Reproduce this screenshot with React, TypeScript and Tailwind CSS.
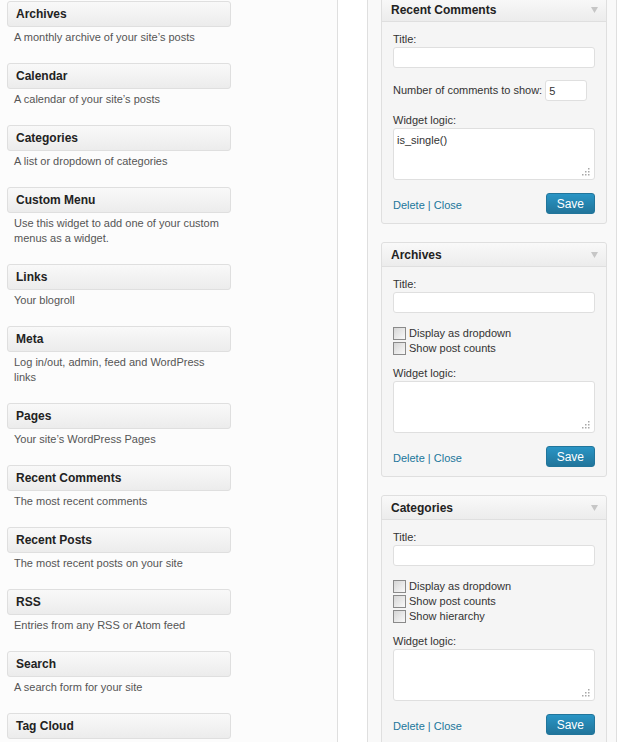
import React from "react";

const AVAILABLE = [
  { title: "Archives", desc: "A monthly archive of your site’s posts" },
  { title: "Calendar", desc: "A calendar of your site’s posts" },
  { title: "Categories", desc: "A list or dropdown of categories" },
  { title: "Custom Menu", desc: "Use this widget to add one of your custom menus as a widget." },
  { title: "Links", desc: "Your blogroll" },
  { title: "Meta", desc: "Log in/out, admin, feed and WordPress links" },
  { title: "Pages", desc: "Your site’s WordPress Pages" },
  { title: "Recent Comments", desc: "The most recent comments" },
  { title: "Recent Posts", desc: "The most recent posts on your site" },
  { title: "RSS", desc: "Entries from any RSS or Atom feed" },
  { title: "Search", desc: "A search form for your site" },
  { title: "Tag Cloud", desc: "" },
];

function Grip() {
  // dotted resize handle in the corner of the textarea
  return (
    <svg width="8" height="8" viewBox="0 0 8 8" className="absolute bottom-[4px] right-[5px]">
      <rect x="6" y="0" width="1.5" height="1.5" fill="#a8a8a8" />
      <rect x="6" y="3" width="1.5" height="1.5" fill="#a8a8a8" />
      <rect x="6" y="6" width="1.5" height="1.5" fill="#a8a8a8" />
      <rect x="3" y="3" width="1.5" height="1.5" fill="#a8a8a8" />
      <rect x="3" y="6" width="1.5" height="1.5" fill="#a8a8a8" />
      <rect x="0" y="6" width="1.5" height="1.5" fill="#a8a8a8" />
    </svg>
  );
}

function Checkbox({ label }: { label: string }) {
  return (
    <label className="flex h-[15px] items-center">
      <span className="block h-[13px] w-[13px] border border-[#8a8a8a] bg-gradient-to-br from-[#d6d6d6] to-[#f9f9f9]" />
      <span className="ml-[3px] text-[#333]">{label}</span>
    </label>
  );
}

function Logic({ value }: { value?: string }) {
  return (
    <div>
      <div className="leading-[15px] text-[#333]">Widget logic:</div>
      <div className="relative">
        <textarea
          defaultValue={value}
          className="block h-[52px] w-full resize-none rounded-[3px] border border-[#dfdfdf] bg-white px-[3px] pt-[4px] text-[11px] leading-[14px] text-[#333] outline-none"
        />
        <Grip />
      </div>
    </div>
  );
}

function Widget({ title, className = "", children }: { title: string; className?: string; children: React.ReactNode }) {
  return (
    <div className={`w-[226px] rounded-[3px] border border-[#dfdfdf] bg-[#f5f5f5] ${className}`}>
      <div className="flex h-[24px] items-center justify-between rounded-t-[3px] border-b border-[#dfdfdf] bg-gradient-to-b from-[#f9f9f9] to-[#ececec] pl-[9px] pr-[8px]">
        <span className="text-[12px] font-bold text-[#222]">{title}</span>
        <svg width="7" height="6" viewBox="0 0 7 6">
          <path d="M0 0h7L3.5 6z" fill="#c6c6c6" />
        </svg>
      </div>
      <div className="px-[11px] pb-[9px] pt-[10px]">
        {children}
        <div className="mt-[13px] flex items-center justify-between">
          <div className="pt-[3px] text-[#21759b]">
            <a>Delete</a> | <a>Close</a>
          </div>
          <button className="h-[21px] rounded-[3px] border border-[#21759b] bg-gradient-to-b from-[#2a95c5] to-[#21759b] px-[10px] text-[12px] text-white">
            Save
          </button>
        </div>
      </div>
    </div>
  );
}

function TitleField() {
  return (
    <div>
      <div className="leading-[15px] text-[#333]">Title:</div>
      <input className="block h-[21px] w-full rounded-[3px] border border-[#dfdfdf] bg-white outline-none" />
    </div>
  );
}

export default function App() {
  return (
    <div className="flex h-[742px] w-[627px] overflow-hidden bg-white font-['Liberation_Sans',Arial,sans-serif] text-[11px]">
      {/* Available widgets */}
      <div className="w-[338px] shrink-0 border-r border-[#dfdfdf] bg-[#fcfcfc] pl-[7px] pt-[1px]">
        {AVAILABLE.map((w) => (
          <div key={w.title} className="w-[224px]">
            <div className="flex h-[26px] items-center rounded-[3px] border border-[#dfdfdf] bg-gradient-to-b from-[#f9f9f9] to-[#ececec] pl-[8px] text-[12px] font-bold text-[#222]">
              {w.title}
            </div>
            {w.desc && (
              <p className="pb-[18px] pl-[7px] pr-[8px] pt-[3px] leading-[15px] text-[#555]">{w.desc}</p>
            )}
          </div>
        ))}
      </div>

      <div className="w-[29px] shrink-0" />

      {/* Sidebar */}
      <div className="flex w-[250px] shrink-0 flex-col gap-[18px] border-x border-[#dfdfdf] bg-[#f9f9f9] pl-[13px]">
        <Widget title="Recent Comments" className="-mt-[3px]">
          <TitleField />
          <div className="mt-[12px] flex h-[21px] items-center">
            <span className="text-[#333]">Number of comments to show:</span>
            <input
              defaultValue="5"
              className="ml-[3px] h-[21px] w-[42px] rounded-[3px] border border-[#dfdfdf] bg-white px-[3px] text-[11px] text-[#333] outline-none"
            />
          </div>
          <div className="mt-[12px]">
            <Logic value="is_single()" />
          </div>
        </Widget>

        <Widget title="Archives">
          <TitleField />
          <div className="mt-[13px]">
            <Checkbox label="Display as dropdown" />
            <Checkbox label="Show post counts" />
          </div>
          <div className="mt-[10px]">
            <Logic />
          </div>
        </Widget>

        <Widget title="Categories">
          <TitleField />
          <div className="mt-[13px]">
            <Checkbox label="Display as dropdown" />
            <Checkbox label="Show post counts" />
            <Checkbox label="Show hierarchy" />
          </div>
          <div className="mt-[10px]">
            <Logic />
          </div>
        </Widget>
      </div>
    </div>
  );
}
